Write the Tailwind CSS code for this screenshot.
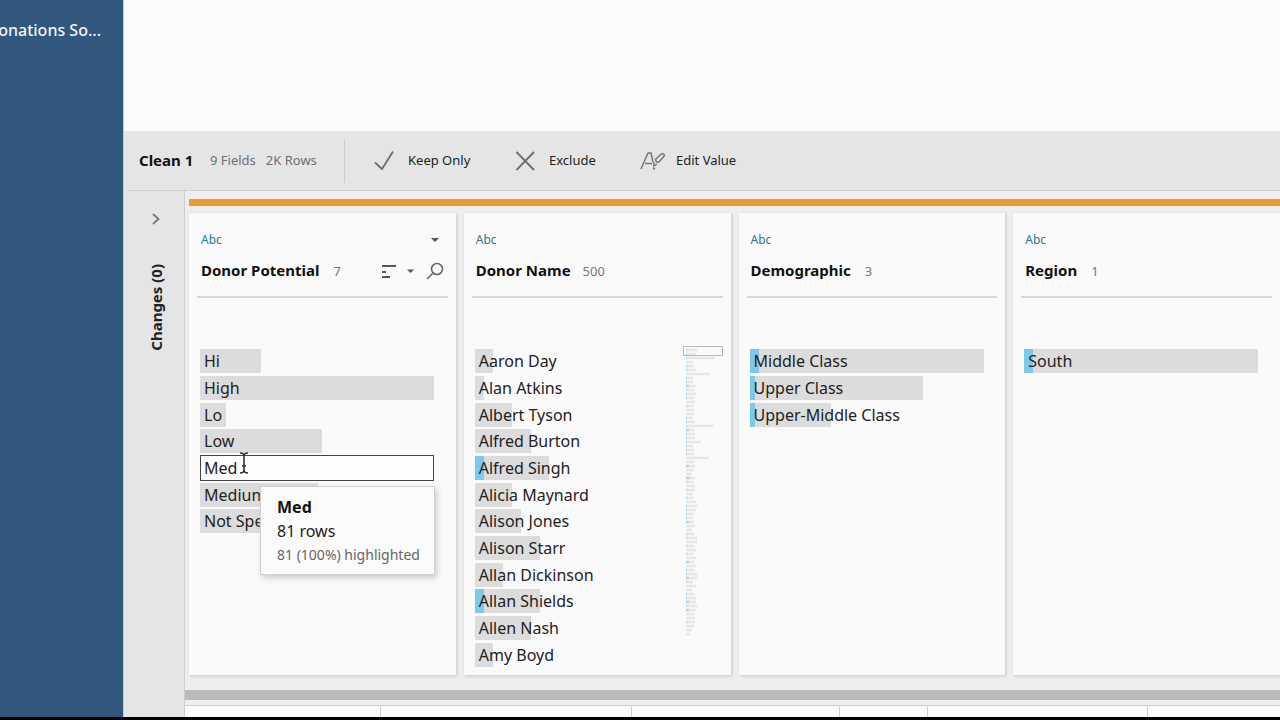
<!DOCTYPE html>
<html lang="en">
<head>
<meta charset="utf-8">
<title>Clean 1</title>
<script src="https://cdn.jsdelivr.net/npm/@tailwindcss/browser@4"></script>
</head>
<body class="flex h-screen flex-col overflow-hidden bg-black font-['Noto_Sans','Open_Sans',sans-serif] text-[#222]">
<div class="flex min-h-0 flex-1">
  <aside class="flex w-[123px] shrink-0 justify-end overflow-hidden bg-[#31587c] pt-[18px] pr-[22px]">
    <a href="#" class="text-base leading-6 font-medium whitespace-nowrap text-[#f0f4f8]">Donations So...</a>
  </aside>

  <main class="flex min-w-0 flex-1 flex-col border-l border-[#c4c6d8] bg-[#e5e5e5]">
    <div class="h-[131px] shrink-0 bg-[#fbfbfb]"></div>

    <header class="ml-1 flex h-[60px] shrink-0 items-center border-b border-[#d0d0d0] pl-[11px] whitespace-nowrap">
      <h1 class="w-[71px] text-[15px] font-bold text-[#111]">Clean 1</h1>
      <p class="flex w-[134px] gap-[10px] text-[13px] text-[#707070]"><span>9 Fields</span><span>2K Rows</span></p>
      <div class="h-11 w-px bg-[#cccccc]"></div>
      <button class="ml-7 flex w-[142px] items-center gap-[13px] text-[13px]">
        <svg class="size-[22px]" viewBox="0 0 22 22" fill="none" stroke="#6d6d6d" stroke-width="1.8"><path d="M2 12.5 9 19 20 1.5"/></svg>Keep Only</button>
      <button class="flex w-[125px] items-center gap-3 text-[13px]">
        <svg class="size-[22px]" viewBox="0 0 22 22" fill="none" stroke="#6d6d6d" stroke-width="1.8"><path d="M1.5 2 19 20M19 2 1.5 20"/></svg>Exclude</button>
      <button class="flex items-center gap-[10px] text-[13px]">
        <svg class="h-[22px] w-[26px]" viewBox="0 0 26 22" fill="none" stroke="#777" stroke-width="1.5"><path d="M1 19 8 3h3l2 9M5 13.500h7"/><path d="m16 9 4.500-4.500q3-2 4 1L19 12q-2 1-3-1t0-2z"/><path d="M14 12v4l3-2M13 18l2 1"/></svg>Edit Value</button>
    </header>

    <div class="flex min-h-0 flex-1">
      <section class="flex w-[61px] shrink-0 flex-col items-center border-r border-[#cdcdcd] pt-5 pl-[3px]">
        <button aria-label="Expand changes">
          <svg class="h-4 w-3" viewBox="0 0 12 16" fill="none" stroke="#777" stroke-width="1.8"><path d="M3 3 8.500 8 3 13"/></svg>
        </button>
        <h2 class="mt-[37px] rotate-180 text-[15px] leading-6 font-bold text-[#222] [writing-mode:vertical-rl]">Changes (0)</h2>
      </section>

      <div class="flex min-w-0 flex-1 flex-col bg-[#eeeeee]">
        <div class="mt-2 ml-1 h-[7px] shrink-0 bg-[#ec9b34]"></div>

        <div class="mt-[7px] ml-1 grid min-h-0 flex-1 grid-cols-4 gap-2">
          <article class="relative flex min-w-0 flex-col bg-[#fafafa] px-2 shadow-[1px_1px_3px_#c4c4c4]">
            <div class="mx-1 mt-[17px] flex h-5 items-center justify-between text-xs text-[#2f7790]"><span>Abc</span>
              <button aria-label="Field menu" class="mr-[5px]"><svg class="h-2 w-2" viewBox="0 0 8 8"><path d="M0 2h8L4 6z" fill="#555"/></svg></button>
            </div>
            <div class="mx-1 mt-2 flex h-6 items-center whitespace-nowrap">
              <div class="flex items-baseline gap-[14px]"><h3 class="text-[15px] font-bold text-[#111]">Donor Potential</h3><span class="text-[13px] text-[#777]">7</span></div>
              <div class="ml-auto flex items-center gap-[11px] pt-0.5">
                <button aria-label="Sort"><svg class="h-4 w-[14px]" viewBox="0 0 14 16" stroke="#555" stroke-width="2"><path d="M0 3h14M0 9h4M0 14h8"/></svg></button>
                <button aria-label="Sort options"><svg class="h-2 w-2" viewBox="0 0 8 8"><path d="M0 2.500h7L3.500 6z" fill="#555"/></svg></button>
                <button aria-label="Search"><svg class="h-[18px] w-[18px]" viewBox="0 0 18 18" fill="none" stroke="#666" stroke-width="1.600"><circle cx="11" cy="7" r="5.500"/><path d="M7 11 1 17"/></svg></button>
              </div>
            </div>
            <div class="mt-[14px] h-0.5 bg-[#d9d9d9]"></div>
            <div class="mt-[50px] ml-[3px] grid h-80 w-[234px] grid-rows-12 text-base">
              <button class="flex items-center"><span class="flex h-6 items-center bg-[#dcdcdc] pl-1 whitespace-nowrap" style="width:26%">Hi</span></button>
              <button class="flex items-center"><span class="flex h-6 items-center bg-[#dcdcdc] pl-1 whitespace-nowrap" style="width:100%">High</span></button>
              <button class="flex items-center"><span class="flex h-6 items-center bg-[#dcdcdc] pl-1 whitespace-nowrap" style="width:11.3%">Lo</span></button>
              <button class="flex items-center"><span class="flex h-6 items-center bg-[#dcdcdc] pl-1 whitespace-nowrap" style="width:52%">Low</span></button>
              <button class="relative flex items-center border border-[#444] bg-[#fdfdfd] pl-[3px]">Med
                <svg class="absolute -top-1 left-[37px] h-[22px] w-3" viewBox="0 0 12 22" fill="none" stroke="#333" stroke-width="1.6"><path d="M2 1q4 0 4 3 0-3 4-3M6 4v15M2 21q4 0 4-3 0 3 4 3M4 14h4"/></svg>
              </button>
              <button class="flex items-center"><span class="flex h-6 items-center bg-[#dcdcdc] pl-1 whitespace-nowrap" style="width:50.5%">Medium</span></button>
              <button class="flex items-center"><span class="flex h-6 items-center bg-[#dcdcdc] pl-1 whitespace-nowrap" style="width:25.5%">Not Spe</span></button>
            </div>
            <div role="tooltip" class="absolute top-[273px] left-[71px] w-[175px] border border-[#cfcfcf] bg-[#fbfbfb] px-4 pt-2 pb-[7px] whitespace-nowrap shadow-[2px_3px_6px_#cccccc]">
              <p class="text-base leading-6 font-bold text-[#111]">Med</p>
              <p class="text-base leading-6">81 rows</p>
              <p class="text-[14px] leading-6 text-[#666]">81 (100%) highlighted</p>
            </div>
          </article>

          <article class="relative flex min-w-0 flex-col bg-[#fafafa] px-2 shadow-[1px_1px_3px_#c4c4c4]">
            <div class="mx-1 mt-[17px] flex h-5 items-center text-xs text-[#2f7790]">Abc</div>
            <div class="mx-1 mt-2 flex h-6 items-center whitespace-nowrap"><div class="flex items-baseline gap-3"><h3 class="text-[15px] font-bold text-[#111]">Donor Name</h3><span class="text-[13px] text-[#777]">500</span></div></div>
            <div class="mt-[14px] h-0.5 bg-[#d9d9d9]"></div>
            <div class="mt-[48px] flex justify-between">
            <div class="mt-0.5 ml-[3px] grid h-80 w-[200px] grid-rows-12 text-base">
              <button class="flex items-center"><span class="flex h-6 items-center bg-[#dcdcdc] pl-1 whitespace-nowrap" style="width:9%">Aaron Day</span></button>
              <button class="flex items-center"><span class="flex h-6 items-center bg-[#dcdcdc] pl-1 whitespace-nowrap" style="width:4.5%">Alan Atkins</span></button>
              <button class="flex items-center"><span class="flex h-6 items-center bg-[#dcdcdc] pl-1 whitespace-nowrap" style="width:18.5%">Albert Tyson</span></button>
              <button class="flex items-center"><span class="flex h-6 items-center bg-[#dcdcdc] pl-1 whitespace-nowrap" style="width:28%">Alfred Burton</span></button>
              <button class="flex items-center"><span class="flex h-6 items-center bg-[#dcdcdc] bg-linear-to-r from-[#7ec8ee] from-[9px] to-transparent to-[9px] pl-1 whitespace-nowrap" style="width:37%">Alfred Singh</span></button>
              <button class="flex items-center"><span class="flex h-6 items-center bg-[#dcdcdc] pl-1 whitespace-nowrap" style="width:18.5%">Alicia Maynard</span></button>
              <button class="flex items-center"><span class="flex h-6 items-center bg-[#dcdcdc] pl-1 whitespace-nowrap" style="width:23%">Alison Jones</span></button>
              <button class="flex items-center"><span class="flex h-6 items-center bg-[#dcdcdc] pl-1 whitespace-nowrap" style="width:32.5%">Alison Starr</span></button>
              <button class="flex items-center"><span class="flex h-6 items-center bg-[#dcdcdc] pl-1 whitespace-nowrap" style="width:14%">Allan Dickinson</span></button>
              <button class="flex items-center"><span class="flex h-6 items-center bg-[#dcdcdc] bg-linear-to-r from-[#7ec8ee] from-[9px] to-transparent to-[9px] pl-1 whitespace-nowrap" style="width:32.5%">Allan Shields</span></button>
              <button class="flex items-center"><span class="flex h-6 items-center bg-[#dcdcdc] pl-1 whitespace-nowrap" style="width:28%">Allen Nash</span></button>
              <button class="flex items-center"><span class="flex h-6 items-center bg-[#dcdcdc] pl-1 whitespace-nowrap" style="width:9%">Amy Boyd</span></button>
            </div>
            <!-- Overview of all values, with the visible range outlined -->
            <svg class="h-[292px] w-10 shrink-0" viewBox="0 0 40 292" fill="none">
              <path stroke="#e6e6e6" stroke-width="2.5" d="M3 4h11m-11 4h10m-10 4h29m-29 4h7m-7 4h8m-8 4h10m-10 4h24m-24 4h7m-7 4h7m-7 4h10m-10 4h9m-9 4h10m-10 4h9m-9 4h9m-9 4h8m-8 4h8m-8 4h8m-8 4h7m-7 4h9m-9 4h27m-27 4h9m-9 4h9m-9 4h9m-9 4h15m-15 4h7m-7 4h8m-8 4h8m-8 4h23m-23 4h9m-9 4h9m-9 4h8m-8 4h6m-6 4h9m-9 4h8m-8 4h9m-9 4h9m-9 4h7m-7 4h8m-8 4h10m-10 4h11m-11 4h10m-10 4h8m-8 4h7m-7 4h8m-8 4h9m-9 4h6m-6 4h8m-8 4h11m-11 4h11m-11 4h9m-9 4h10m-10 4h8m-8 4h10m-10 4h8m-8 4h10m-10 4h9m-9 4h11m-11 4h11m-11 4h7m-7 4h10m-10 4h6m-6 4h9m-9 4h10m-10 4h10m-10 4h11m-11 4h10m-10 4h9m-9 4h9m-9 4h9m-9 4h8m-8 4h6m-6 4h4"/>
              <path stroke="#b4daec" stroke-width="2.5" d="M3 4h1m-1 4h1m-1 4h1m-1 8h1m-1 4h1m-1 8h1m-1 4h1m-1 4h3m-3 4h1m-1 4h1m-1 4h1m-1 8h1m-1 12h1m-1 4h1m-1 4h1m-1 4h3m-3 4h1m-1 4h1m-1 4h1m-1 4h1m-1 4h1m-1 4h1m-1 12h3m-3 12h4m-4 4h1m-1 8h1m-1 8h1m-1 8h1m-1 4h1m-1 4h1m-1 4h1m-1 4h3m-3 12h1m-1 4h1m-1 8h1m-1 8h1m-1 8h3m-3 8h1m-1 4h1m-1 4h3m-3 4h1m-1 12h1m-1 4h1m-1 4h3m-3 4h1m-1 4h3m-3 12h1"/>
              <rect x="0.5" y="0.5" width="39" height="9" stroke="#b4bab8"/>
            </svg>
            </div>
          </article>

          <article class="flex min-w-0 flex-col bg-[#fafafa] px-2 shadow-[1px_1px_3px_#c4c4c4]">
            <div class="mx-1 mt-[17px] flex h-5 items-center text-xs text-[#2f7790]">Abc</div>
            <div class="mx-1 mt-2 flex h-6 items-center whitespace-nowrap"><div class="flex items-baseline gap-[14px]"><h3 class="text-[15px] font-bold text-[#111]">Demographic</h3><span class="text-[13px] text-[#777]">3</span></div></div>
            <div class="mt-[14px] h-0.5 bg-[#d9d9d9]"></div>
            <div class="mt-[50px] ml-[3px] grid h-80 w-[234px] grid-rows-12 text-base">
              <button class="flex items-center"><span class="flex h-6 items-center bg-[#dcdcdc] bg-linear-to-r from-[#7ec8ee] from-[9px] to-transparent to-[9px] pl-1 whitespace-nowrap" style="width:100%">Middle Class</span></button>
              <button class="flex items-center"><span class="flex h-6 items-center bg-[#dcdcdc] bg-linear-to-r from-[#7ec8ee] from-[5px] to-transparent to-[5px] pl-1 whitespace-nowrap" style="width:74%">Upper Class</span></button>
              <button class="flex items-center"><span class="flex h-6 items-center bg-[#dcdcdc] bg-linear-to-r from-[#7ec8ee] from-[5px] to-transparent to-[5px] pl-1 whitespace-nowrap" style="width:35%">Upper-Middle Class</span></button>
            </div>
          </article>

          <article class="flex min-w-0 flex-col bg-[#fafafa] px-2 shadow-[1px_1px_3px_#c4c4c4]">
            <div class="mx-1 mt-[17px] flex h-5 items-center text-xs text-[#2f7790]">Abc</div>
            <div class="mx-1 mt-2 flex h-6 items-center whitespace-nowrap"><div class="flex items-baseline gap-[14px]"><h3 class="text-[15px] font-bold text-[#111]">Region</h3><span class="text-[13px] text-[#777]">1</span></div></div>
            <div class="mt-[14px] h-0.5 bg-[#d9d9d9]"></div>
            <div class="mt-[50px] ml-[3px] grid h-80 w-[234px] grid-rows-12 text-base">
              <button class="flex items-center"><span class="flex h-6 items-center bg-[#dcdcdc] bg-linear-to-r from-[#7ec8ee] from-[9px] to-transparent to-[9px] pl-1 whitespace-nowrap" style="width:100%">South</span></button>
            </div>
          </article>
        </div>

        <div class="mt-[15px] h-[10px] shrink-0 bg-[#bababa]"></div>
        <div class="mt-[5px] flex h-3 shrink-0 divide-x divide-[#d0d0d0] border-t border-[#d0d0d0] bg-[#fbfbfb]">
          <div class="w-[196px]"></div><div class="w-[251px]"></div><div class="w-[208px]"></div><div class="w-[88px]"></div><div class="w-[220px]"></div><div class="flex-1"></div>
        </div>
      </div>
    </div>
  </main>
</div>
<footer class="h-[3px] shrink-0 bg-black"></footer>
</body>
</html>
